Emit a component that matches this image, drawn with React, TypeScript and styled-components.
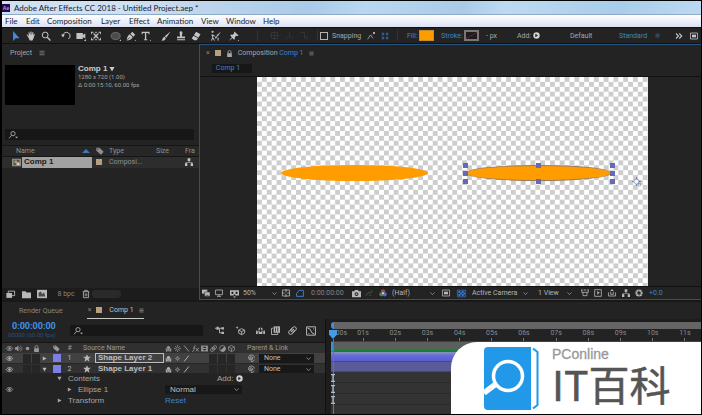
import React from "react";
import styled, { createGlobalStyle, css } from "styled-components";

const c = {
  bg: "#232323",
  dark: "#191919",
  field: "#171717",
  line: "#111111",
  text: "#a8a8a8",
  dim: "#858585",
  blue: "#3d84cf",
  edge: "#27547f",
  orange: "#ff9c00",
  tan: "#b59f7e",
  layer: "#7c80e6",
};

const GlobalStyle = createGlobalStyle`
  * { box-sizing: border-box; }
  html, body { margin: 0; background: #000; }
  body { font-family: Roboto, "Liberation Sans", sans-serif; font-size: 7px; line-height: 10px; color: ${c.text}; }
  button, input, select { font: inherit; color: inherit; margin: 0; padding: 0; border: 0; background: none; }
  button { display: inline-flex; align-items: center; justify-content: center; white-space: nowrap; }
`;

/* ---------- icons ---------- */

const Svg = styled.svg<{ $w: number; $h?: number }>`
  width: ${(p) => p.$w}px;
  height: ${(p) => p.$h ?? p.$w}px;
  flex: none;
  display: block;
  overflow: visible;
`;

const S = { fill: "none", stroke: "currentColor", strokeWidth: 1.2 };
const F = { fill: "currentColor" };

const glyphs: Record<string, React.ReactNode> = {
  arrow: <path {...F} d="M2.500 0v12l3-3.400h4.700z" />,
  hand: (
    <path {...F} d="M2.2 6.5 0.8 4.8c.5-.9 1.3-.4 1.9.4L3.6 6 2.9 2c.6-.7 1.2-.4 1.4.3l.9 2.6V1c.6-.6 1.2-.4 1.4.2l.2 3.7L7.9 1.4c.7-.4 1.2 0 1.1.7l-.6 3.3 1.3-1.8c.7-.2 1.1.3.8 1L8.9 9l-1.2 2.5H4.6z" />
  ),
  magnify: (
    <g {...S}>
      <circle cx="5" cy="4.8" r="3.5" />
      <path d="m7.5 7.5 3.8 4" strokeWidth="1.6" />
    </g>
  ),
  rotate: (
    <g {...S}>
      <path d="M2.3 5.5A4.3 4.3 0 1 1 8.8 9.6" />
      <path {...F} stroke="none" d="m0 4.2 4.6-.1L2.4 7.8z" />
    </g>
  ),
  camera: <path {...F} d="M.5 2.5h7.7v2.2l3-1.8v6.2l-3-1.8v2.2H.5zM9.5 12l2.5-2.5V12z" />,
  anchor: (
    <g {...F}>
      <path d="M0 1h3v1H1v2H0zM9 1h3v3h-1V2H9zM0 8h1v2h2v1H0zM11 8h1v3H9v-1h2z" />
      <path d="M5.2 1h1.6v1.6H5.2zM5.2 9.4h1.6V11H5.2zM2.7 2.7l1.5.4 1.8 1.7 1.8-1.7 1.5-.4-.4 1.5L7.2 6l1.7 1.8.4 1.5-1.5-.4L6 7.2 4.200 8.900l-1.500.4.4-1.500L4.800 6 3.100 4.200z" />
    </g>
  ),
  ellipse: (
    <g>
      <ellipse cx="5.600" cy="6" rx="5.400" ry="4.200" fill="#4b4b4b" stroke="#777" />
      <path {...F} d="m10 12 2-2v2z" />
    </g>
  ),
  pen: (
    <g>
      <path {...F} d="M.8 11.500C1.200 8.500 1.600 5.500 4.500 4L8 7.500C6.600 10.300 3.800 11 .8 11.500zM5.300 3.200 7.500 1l3.600 3.600-2.300 2.200zM10.500 12l1.500-1.500V12z" />
      <path d="M1.200 11 4.600 7.600" stroke={c.bg} strokeWidth=".8" />
    </g>
  ),
  type: <path {...F} d="M.8 1h9.400v2.800H9.200L8.700 2.300H6.300v7.500l1.200.4v.8h-4v-.8l1.200-.4V2.300H2.300L1.800 3.800h-1zM10.500 12l1.500-1.500V12z" />,
  brush: <path {...F} d="M11.500.5 6.300 8 4.500 6.300zM4 6.800 5.800 8.600C5 11 3 11.800.6 11.500 2 10.500 1.600 7.600 4 6.800z" />,
  stamp: <path {...F} d="M4.300 2.200C4.300-.2 7.700-.2 7.700 2.200L7 6.500h3.800v2.200H1.200V6.500H5zM1.200 9.800h9.600v1.200H1.200z" />,
  eraser: <path {...F} d="M6.200.8 11.400 4 8.800 8 3.500 4.900zM3 5.600l5.300 3.200-1.500 2.300H4L.8 9z" />,
  roto: (
    <g>
      <path {...F} d="m12 .5-4 6-1.500-1zM6 6l1.500 1.200C7 8.800 5.600 9 4.600 9 5.500 8 5 6.800 6 6zM1.800 2.200a1.300 1.300 0 1 1 .1 0z" />
      <path {...S} d="M2 4v4l-1.500 3.500M2.200 8 4 11.500M8.500 8v3.500M.5 5l4 1" />
    </g>
  ),
  pin: <path {...F} d="m6.500.5 5 5-1.300.4-1.500-.3-1.800 1.900.2 2-1 .9L4 8.300.8 11.500.5 11l3-3.500L1.500 5.300l1-1 2 .3L6.300 2.700 6 1.500zM10.500 12l1.500-1.500V12z" />,
  axisA: <path {...S} d="M2 2h8v8H2zM6 0v12M0 6h12" />,
  axisB: <path {...S} d="M6 1v6l-5 3.500M6 7l5 3.500" />,
  axisC: <path {...S} d="M1 2h5v7l5-3M6 9l5 2" />,
  snapA: (
    <g>
      <path {...S} d="m1 11 4-6.500L9 9.500" />
      <path {...F} d="M9 0h3v3H9zM6.500 4h2v1h-2z" />
    </g>
  ),
  snapB: (
    <g {...S} strokeWidth="1.600">
      <path d="M1 1l3 3M11 1 8 4M1 11l3-3M11 11 8 8M1 4h3V1M11 4H8V1M1 8h3v3M11 8H8v3" />
    </g>
  ),
  plus: (
    <g>
      <circle cx="6" cy="6" r="5.500" fill="#d2d2d2" />
      <path {...F} fill="#232323" d="m4 3 4.500 3L4 9z" />
    </g>
  ),
  menu: <path {...S} d="M1 2.500h10M1 6h10M1 9.500h10" />,
  more: <path {...S} strokeWidth="2.200" d="m0 1 5 5-5 5M6.500 1l5 5-5 5" />,
  lock: (
    <g>
      <path {...F} d="M2 5.500h8V12H2z" />
      <path {...S} strokeWidth="1.600" d="M3.500 5.500v-2c0-3.500 5-3.500 5 0V6" />
    </g>
  ),
  tag: <path {...F} d="M.5 1H5l6.500 6-4 4.700L.5 5.500zM2 2.300v1.400h1.500V2.300z" fillRule="evenodd" />,
  tree: <path {...F} d="M4 .5h4v4H6.600v1.700H11V8h1v4H8.500V8h1.200v-.7H2.300V8h1.200v4H0V8h1V6.200h4.400V4.500H4z" />,
  comp: (
    <g>
      <path fill="#8f8f8f" d="M0 1h12v10H0z" />
      <path fill="#4c584f" d="M2 2.500h8v7H2z" />
      <circle cx="5" cy="5" r="2" fill="#c69554" />
      <path fill="#d5d0c5" d="M6 6h4v3.500H6z" />
    </g>
  ),
  interpret: (
    <g>
      <path {...S} d="M3 1.500h8.500v6H3z" />
      <path {...F} d="M.5 4H8v6.500H.5z" />
    </g>
  ),
  folder: <path {...F} d="M0 1.500h4.500L6 3.200h6V11H0z" />,
  newcomp: (
    <g>
      <path {...F} d="M0 1h12v10H0z" />
      <path fill="#4a4a4a" d="M2 4.500 4.500 3l2 3L8.500 4 10 9H2z" />
    </g>
  ),
  trash: <path {...S} d="M1 2.500h10M4 2.500v-2h4v2M2.200 2.500V11.500h7.600v-9M4.800 5v4.500M7.200 5v4.500" />,
  layers: (
    <g>
      <path {...F} d="M0 1h8v6H0z" />
      <path d="M4 4.500h8V11H4z" fill="currentColor" stroke={c.bg} strokeWidth=".8" />
      <path d="M6.500 9.500h3" stroke={c.bg} />
    </g>
  ),
  monitor: <path {...S} d="M.8 1.500h10.400v7H.8zM3 11h6M6 8.500V11" />,
  goggles: (
    <g>
      <path {...F} d="M0 1.500h12V8.500H7.500L6 6.500 4.500 8.500H0z" />
      <path fill={c.bg} d="M2 3.500h2.500v3H2zM7.500 3.500H10v3H7.500z" />
      <path {...F} d="m6 12 2-2H4z" />
    </g>
  ),
  gridicon: <path {...S} d="M.7 1.500h10.600v9H.7zM6 0v5M6 7v5M0 6h4M8 6h4" />,
  mask: <path {...S} strokeWidth="1.400" d="M.7 11V7L5 2h6v9z" />,
  snap: (
    <g>
      <path {...F} d="M0 3h3l1-1.700h4L9 3h3v8H0z" />
      <circle cx="6" cy="6.800" r="2.600" fill={c.bg} />
      <circle cx="6" cy="6.800" r="1.300" {...F} />
    </g>
  ),
  showsnap: <path fill="none" stroke="#3c4c38" strokeWidth="1.800" d="m1 10 5-5 2 1 3.500-4M6 9l3 1" />,
  rgb: (
    <g>
      <circle cx="6" cy="3.700" r="3.300" fill="#b04341" />
      <circle cx="3.600" cy="7.900" r="3.200" fill="#478459" />
      <circle cx="8.400" cy="7.900" r="3.200" fill="#4a73c3" />
      <circle cx="6" cy="6.300" r="1.500" fill="#ddd" />
    </g>
  ),
  roi: (
    <g>
      <path {...S} d="M.7 1.500h10.600v9H.7z" />
      <path {...F} d="M3 4h6v4H3z" />
    </g>
  ),
  transp: (
    <g>
      <path fill="#183b68" stroke="#2e70b8" d="M.5 1.500h11v9H.5z" />
      <path fill="#4c85c1" d="M2 3h2.500v2H2zM6.500 3H9v2H6.500zM4.500 5h2v2h-2zM9 5h1.500v2H9zM2 7h2.500v2H2zM6.500 7H9v2H6.500z" />
    </g>
  ),
  pixel: <path {...S} d="M0 1.500h3M9 1.500h3M3 5h6v5H3zM1 2v3h2M11 2v3H9M4 1.500h4" />,
  fast: (
    <g>
      <path {...S} d="M1 1h10v10H1z" />
      <path {...F} d="m4.500 3 4.500 3-2 .5L5.500 9z" />
    </g>
  ),
  timeline: (
    <g>
      <path {...S} d="M.7 5v5.500h10.600V5M4 4v4M8 4v4M4 8h4" />
      <path {...F} d="m6 0 2.500 3h-5z" />
    </g>
  ),
  exposure: (
    <g>
      <circle cx="6" cy="6" r="4" fill="none" stroke="currentColor" strokeWidth="2.700" />
      <path stroke={c.bg} strokeWidth=".7" d="m6 .500-1 3M11 3.500 8.500 4M11 8.500 8.300 7.500M6 11.500l1-3M1 8.500 3.500 8M1 3.500l2.500 1" />
    </g>
  ),
  flow: (
    <g>
      <path {...S} d="M0 3h6v6h3M6 3h3" />
      <path {...F} d="M2 1h3v4H2zM8.500 1.500H12v3H8.500zM8.500 7.500H12v3H8.500z" />
    </g>
  ),
  cube: (
    <g>
      <path {...S} d="m7.500 3.500 4 2v4l-4 2-4-2v-4zM3.500 5.500l4 2 4-2M7.500 7.500v4" />
      <path {...F} d="M1.500 0l.6 1.600 1.600.600-1.600.6-.6 1.600-.6-1.600L-.7 2.200l1.600-.6z" />
    </g>
  ),
  hide: (
    <g>
      <path {...F} d="M0 6h12v4.500H0zM3 5C3 .8 9 .8 9 5z" />
      <path stroke={c.bg} strokeWidth="1.200" d="M6 2v6M3 8v3M9 8v3M1 6.500h10" />
    </g>
  ),
  shy: (
    <g>
      <path {...F} d="M1 6h10v1.500H1zM3 5.500C3 .5 9 .5 9 5.500zM1.500 8h3v3h-3zM7.500 8h3v3h-3z" />
      <path {...S} d="M6 6v5" />
    </g>
  ),
  blend: (
    <g>
      <path {...S} d="M3 3H.7v8.300H9V9" />
      <path {...F} d="M3.500.500H12V9H3.500z" />
      <path stroke={c.bg} d="M6 2v5.500M9 2v5.500" />
    </g>
  ),
  blur: (
    <g {...S}>
      <ellipse cx="4.600" cy="7.600" rx="4.200" ry="2.900" transform="rotate(-40 4.600 7.600)" />
      <ellipse cx="7.400" cy="4.600" rx="4.200" ry="2.900" transform="rotate(-40 7.400 4.600)" />
      <path d="m4 8 4-4" />
    </g>
  ),
  graph: <path {...S} d="M.7 1h10.600v10H.7zM2 2.500c5 0 3 7 8 7M3 9h1M9 3v1" />,
  eye: (
    <g>
      <path {...S} strokeWidth="1.500" d="M.5 6C3 1.500 9 1.500 11.500 6 9 10.500 3 10.500.5 6z" />
      <circle cx="6" cy="6" r="2.200" {...F} />
    </g>
  ),
  audio: (
    <g>
      <path {...F} d="M0 4h2.500L6 1v10L2.500 8H0z" />
      <path {...S} d="M7.500 3.500c2 1.500 2 3.500 0 5M9 1.500c4 2.500 4 6.500 0 9" />
    </g>
  ),
  solo: <circle cx="6" cy="6" r="3" {...F} />,
  star: <path {...F} d="m6 .3 1.600 4h4.100L8.500 7l1.200 4.500L6 8.900l-3.700 2.600L3.500 7 .3 4.300h4.100z" />,
  sun: (
    <g>
      <circle cx="6" cy="6" r="2.600" {...S} />
      <path {...S} d="M6 0v2.500M6 9.500V12M0 6h2.500M9.500 6H12M2 2l1.500 1.500M8.500 8.500 10 10M10 2 8.500 3.500M3.500 8.500 2 10" />
    </g>
  ),
  slash: <path {...S} strokeWidth="1.600" d="M2 11 10 1" />,
  backslash: <path {...S} strokeWidth="1.600" d="m2 1 8 10" />,
  effects: <path {...S} strokeWidth="1.500" d="M6 1C4 .5 4 3 3.500 6S2.500 11.500.5 11M2 5h3.500M6.500 5l5 6M11.500 5l-5 6" />,
  film: (
    <g>
      <path {...F} d="M0 1h12v10H0z" />
      <path fill={c.bg} d="M4 3h4.500v2.300H4zM4 6.700h4.500V9H4zM1.300 2.500h1V4h-1zM1.300 6h1v1.500h-1zM10 2.500h1V4h-1zM10 6h1v1.500h-1z" />
    </g>
  ),
  adjust: (
    <g>
      <circle cx="6" cy="6" r="5" {...S} />
      <path {...F} d="M9.500 2.500A5 5 0 1 1 2.500 9.500z" />
    </g>
  ),
  box3d: <path {...S} d="M6 .7 11 3.300v5.400L6 11.300 1 8.700V3.300zM1 3.300 6 6l5-2.700M6 6v5.300" />,
  whip: <path {...S} d="M7.800 6A1.800 1.800 0 1 1 6 4.200c4 0 3 5-.5 4.800C.5 8.500 1.500 1.500 6.500 1.500c3 0 4.500 2 4.500 4M6 11.500c2 0 4-1 5-3" />,
  target: (
    <g {...S}>
      <path d="M6 1.500 10.500 6 6 10.500 1.500 6zM6 0v3M0 6h3M9 6h3M6 9v3" />
      <path d="M8 8.500h3.500V12H8z" opacity=".6" />
    </g>
  ),
  right: <path {...F} d="m2 1 9 5-9 5z" />,
  down: <path {...F} d="M1 2h10L6 11z" />,
  up: <path fill="#3d78ba" d="M0 9 6 3l6 6z" />,
  chevron: <path {...S} strokeWidth="1.500" d="m1 3.500 5 5 5-5" />,
  find: (
    <g>
      <circle cx="6" cy="4" r="3.200" {...S} />
      <path {...S} d="M4 6.500 0 11" />
      <path {...F} d="M9 8.500h4.500L11.300 11z" />
    </g>
  ),
};

const Icon = ({ n, s = 8 }: { n: string; s?: number }) => (
  <Svg viewBox="0 0 12 12" $w={s} aria-hidden="true">
    {glyphs[n]}
  </Svg>
);

/* ---------- shell ---------- */

const Window = styled.main`
  min-height: 100vh;
  display: flex;
  flex-direction: column;
  position: relative;
  border: solid #000;
  border-width: 1px 1px 2px 2px;
  background: ${c.bg};
  overflow: hidden;
`;

const TitleBar = styled.header`
  height: 14px;
  display: flex;
  align-items: center;
  gap: 4px;
  color: #16202e;
  font: 8px/12px Lato, sans-serif;
  background: linear-gradient(100deg, #cfe0f2 0 18%, #b9d3ec 32%, #a9cbe9 44%, #b9d7f0 52%, #aacbe8 66%, #bedaf1 72%, #a9cdea 88%, #bcd9f1);
  border-bottom: 1px solid #8faac4;
`;

const AppBadge = styled.span`
  width: 8px;
  height: 8px;
  background: #2a0b4a;
  color: #b79be8;
  font: bold 5px/8px "Liberation Sans", sans-serif;
  text-align: center;
`;

const MenuBar = styled.nav`
  height: 12px;
  display: grid;
  grid-template-columns: 21px 21px 54px 28px 28px 44px 25px 37px 1fr;
  padding-left: 3px;
  justify-items: start;
  background: linear-gradient(#fff, #dde1f3);
  color: #1c1c28;
  font: 8px/12px Lato, sans-serif;
`;

const ToolBar = styled.div`
  height: 17px;
  display: flex;
  align-items: center;
  padding-left: 6px;
  border: solid ${c.line};
  border-width: 1px 0;
`;

const ToolGroup = styled.div<{ $gap?: number; $dim?: boolean }>`
  display: flex;
  margin-right: ${(p) => p.$gap ?? 5}px;
  color: #c4c4c4;
  ${(p) => p.$dim && css`color: #373737; padding-left: 9px;`}
`;

const IconButton = styled.button<{ $w?: number; $color?: string }>`
  width: ${(p) => p.$w ?? 15}px;
  height: 12px;
  flex: none;
  ${(p) => p.$color && `color: ${p.$color};`}
`;

const Divider = styled.span`
  width: 1px;
  height: 11px;
  background: #333;
`;

const Options = styled.div`
  flex: 1;
  display: grid;
  align-items: center;
  grid-template-columns: 12px 35px 14px 16px 10px 12px 22px 23px 22px 31px 13px 40px 49px 32px 24px 15px 1fr;
  padding-left: 2px;
  overflow: hidden;
`;

const Check = styled.input`
  appearance: none;
  width: 8px;
  height: 8px;
  border: 1px solid #b2b2b2 !important;
`;

const Text = styled.span<{ $tone?: string }>`
  white-space: nowrap;
  color: ${(p) => p.$tone ?? "inherit"};
`;

const TextButton = styled.button<{ $tone?: string }>`
  justify-self: start;
  color: ${(p) => p.$tone ?? "inherit"};
`;

const Paint = styled.button<{ $none?: boolean }>`
  width: 15px;
  height: 11px;
  background: ${(p) => (p.$none ? "linear-gradient(150deg, #231a1b 45%, #6b2f35 50%, #231a1b 55%)" : c.orange)};
  border: ${(p) => (p.$none ? "2px solid #777" : "1px solid #c98a28")};
`;

/* ---------- panels ---------- */

const Workspace = styled.div`
  flex: 1;
  display: flex;
  min-height: 256px;
`;

const ProjectPanel = styled.section`
  width: 197px;
  flex: none;
  display: flex;
  flex-direction: column;
`;

const PanelTitle = styled.h2`
  display: flex;
  align-items: center;
  gap: 7px;
  height: 17px;
  margin: 0;
  padding-left: 8px;
  font: inherit;
`;

const Summary = styled.div`
  display: flex;
  gap: 3px;
  padding: 4px 3px 0;
`;

const Thumb = styled.div`
  width: 70px;
  height: 40px;
  background: #000;
`;

const Facts = styled.div`
  font: 6px/8px Roboto, sans-serif;
  color: #a2a2a2;
`;

const CompName = styled.button`
  gap: 2px;
  font: bold 8px/8px "Liberation Sans", sans-serif;
  color: #cdcdcd;
  display: flex;
`;

const SearchBox = styled.label<{ $gap?: boolean }>`
  display: flex;
  align-items: center;
  gap: 4px;
  height: 11px;
  padding-left: 4px;
  background: ${c.field};
  color: #bbb;
  ${(p) => p.$gap && css`margin: 24px 5px 5px 3px;`}
  input { flex: 1; min-width: 0; outline: 0; }
`;

const Items = styled.table`
  width: 100%;
  table-layout: fixed;
  border-collapse: collapse;
  color: #909090;
  th, td { padding: 0; height: 11px; font-weight: normal; text-align: left; white-space: nowrap; }
  thead tr { background: #272727; border: solid #151515; border-width: 1px 0; }
  tbody td { height: 11px; background: #2d2d2d; }
  tbody svg { color: #c4c4c4; }
`;

const Col = styled.col<{ $w?: number }>`
  width: ${(p) => (p.$w ? `${p.$w}px` : "auto")};
`;

const HeadCell = styled.span`
  display: flex;
  align-items: center;
  justify-content: space-between;
  padding: 0 2px 0 4px;
`;

const Chosen = styled.td`
  && { background: #a2a2a2; color: #1a1a1a; font: bold 8px/10px "Liberation Sans", sans-serif; padding-left: 2px; }
`;

const Swatch = styled.i<{ $color: string; $w?: number }>`
  display: block;
  width: ${(p) => p.$w ?? 6}px;
  height: ${(p) => p.$w ?? 6}px;
  background: ${(p) => p.$color};
`;

const ProjectFooter = styled.footer`
  height: 12px;
  margin-top: auto;
  display: grid;
  grid-template-columns: 15px 16px 19px 28px 10px 29px;
  align-items: center;
  padding-left: 2px;
  background: #1c1c1c;
  color: #b8b8b8;
`;

const Pill = styled.span`
  height: 8px;
  border-radius: 4px;
  background: #2a2a2a;
`;

const CompPanel = styled.section`
  flex: 1;
  min-width: 0;
  display: flex;
  flex-direction: column;
  border: 1px solid ${c.edge};
  border-right: 0;
`;

const CompHead = styled.header`
  height: 16px;
  display: flex;
  align-items: center;
  gap: 5px;
  padding-left: 6px;
`;

const CompTabs = styled.div`
  height: 16px;
  padding: 2px 0 0 12px;
  border-bottom: 1px solid ${c.line};
`;

const CompTab = styled.button`
  width: 40px;
  height: 9px;
  padding-right: 8px;
  background: ${c.field};
  color: ${c.blue};
`;

const Viewer = styled.div`
  flex: 1;
  display: flex;
  padding: 0 53px 0 57px;
`;

const Canvas = styled.div`
  flex: 1;
  position: relative;
  background: repeating-conic-gradient(#cdcdcd 0 25%, #fff 0 50%) 0 0 / 2.5% 4.7%;
`;

const Ellipse = styled.div<{ $x: number; $picked?: boolean }>`
  position: absolute;
  left: ${(p) => p.$x}px;
  top: 88px;
  width: 147px;
  height: 16px;
  border-radius: 50%;
  background: ${c.orange};
  ${(p) => p.$picked && "border: 1px solid #9d7a5c;"}
`;

const Handle = styled.i<{ $x: number; $y: number }>`
  position: absolute;
  left: ${(p) => p.$x}px;
  top: ${(p) => p.$y}px;
  width: 5px;
  height: 5px;
  background: #6669b5;
`;

const AnchorMark = styled.span`
  position: absolute;
  left: 375px;
  top: 100px;
  color: #6f83bd;
`;

const ViewFooter = styled.footer`
  height: 13px;
  display: grid;
  align-items: center;
  justify-items: start;
  grid-template-columns: 13px 14px 14px 39px 14px 15px 41px 13px 14px 13px 50px 15px 15px 66px 43px 13px 14px 14px 13px 14px 1fr;
  padding-left: 2px;
  border-top: 1px solid ${c.line};
  color: #b8b8b8;
`;

const SelectWrap = styled.label<{ $w: string; $fill?: boolean }>`
  display: flex;
  align-items: center;
  width: ${(p) => p.$w};
  height: 9px;
  padding-right: 3px;
  color: #b5b5b5;
  ${(p) => p.$fill && css`background: #181818; padding-left: 5px; color: #c0c0c0;`}
  select { appearance: none; flex: 1; min-width: 0; height: 9px; line-height: 9px; outline: 0; }
`;

const Select = ({ value, label, w = "100%", fill }: { value: string; label: string; w?: string; fill?: boolean }) => (
  <SelectWrap $w={w} $fill={fill}>
    <select aria-label={label} defaultValue={value}>
      <option>{value}</option>
    </select>
    <Icon n="chevron" s={5} />
  </SelectWrap>
);

/* ---------- timeline ---------- */

const Timeline = styled.section`
  flex: none;
  border-top: 2px solid #181818;
`;

const Tabs = styled.div`
  display: flex;
  align-items: center;
  height: 17px;
  padding-left: 17px;
  gap: 24px;
  color: ${c.dim};
`;

const ActiveTab = styled.div`
  display: flex;
  align-items: center;
  gap: 5px;
  width: 57px;
  height: 17px;
  padding-left: 1px;
  border-bottom: 1px solid #c9c9c9;
  color: #c0c0c0;
  i { margin-right: 2px; }
`;

const TimelineBody = styled.div`
  display: flex;
  height: 95px;
`;

const LayerSide = styled.div`
  width: 324px;
  flex: none;
  display: flex;
  flex-direction: column;
  border-right: 1px solid ${c.line};
`;

const Controls = styled.div`
  height: 23px;
  display: grid;
  grid-template-columns: 68px 133px 7px 21px 20px 17px 15px 18px 20px;
  align-items: center;
  color: #b5b5b5;
`;

const Clock = styled.div`
  align-self: start;
  padding: 2px 0 0 10px;
  font: bold 9px/10px Roboto, sans-serif;
  color: #3f92e6;
  small { display: block; margin-left: -4px; font: 6px/8px Roboto, sans-serif; color: #27507c; white-space: nowrap; }
`;

const Row = styled.div<{ $kind?: "head" | "picked" | "layer" | "prop" }>`
  display: grid;
  align-items: center;
  grid-template-columns: 40px 11px 11px 19px 12px 69px 73px 10px 12px 56px;
  height: ${(p) => (p.$kind === "head" || p.$kind === "prop" ? 11 : 10)}px;
  background: ${(p) => ({ head: "#303030", picked: "#414141", layer: "#313131", prop: c.bg })[p.$kind ?? "layer"]};
  color: #b8b8b8;
  ${(p) => p.$kind === "head" && css`border-top: 1px solid #161616; color: #999;`}
  ${(p) => p.$kind === "layer" && css`border-top: 1px solid #272727;`}
`;

const PropRow = styled(Row)<{ $indent: number }>`
  grid-template-columns: 16px ${(p) => p.$indent}px 11px 1fr 78px 82px;
  font: 8px/10px "Liberation Sans", sans-serif;
  color: #a5a5a5;
`;

const Cells = styled.span<{ $pad?: number }>`
  display: grid;
  grid-auto-flow: column;
  grid-auto-columns: 9px;
  justify-content: start;
  padding-left: ${(p) => p.$pad ?? 0}px;
  justify-items: center;
  align-items: center;
`;

const Slot = styled.i<{ $at: number }>`
  grid-column: ${(p) => p.$at};
  justify-self: stretch;
  height: 9px;
  margin-right: 1px;
  background: #262626;
`;

const LayerName = styled.span<{ $boxed?: boolean }>`
  height: 10px;
  padding-left: 2px;
  border: 1px solid ${(p) => (p.$boxed ? "#bdbdbd" : "transparent")};
  font: bold 8px/8px "Liberation Sans", sans-serif;
  color: #bdbdbd;
  white-space: nowrap;
`;

const AddLabel = styled.span`
  display: flex;
  align-items: center;
  gap: 3px;
  justify-self: end;
  width: 26px;
  white-space: nowrap;
`;

const TrackSide = styled.div`
  flex: 1;
  position: relative;
  padding-left: 5px;
  display: flex;
  flex-direction: column;
  background: #1d1d1d;
`;

const Navigator = styled.div`
  height: 7px;
  flex: none;
  margin-top: 3px;
  background: #656565;
  border-left: 3px solid #3e8fdb;
  border-radius: 3px 0 0 3px;
`;

const Ruler = styled.div`
  height: 13px;
  flex: none;
  display: grid;
  grid-template-columns: 16px repeat(11, 1fr);
  background: ${c.bg};
  color: #8c8c8c;
  line-height: 9px;
  border-bottom: 1px solid #5d3535;
`;

const Tick = styled.span`
  display: flex;
  flex-direction: column;
  align-items: center;
  &::after { content: ""; width: 1px; height: 3px; background: #777; }
  &:first-child { align-items: flex-end; }
  &:first-child::after { content: none; }
`;

const WorkArea = styled.div`
  height: 10px;
  flex: none;
  background: #5c605c;
  border-left: 3px solid #3e8fdb;
  border-bottom: 2px solid #15812f;
`;

const Track = styled.div<{ $kind: "picked" | "layer" | "empty" }>`
  flex: none;
  height: ${(p) => (p.$kind === "empty" ? 11 : 10)}px;
  border-bottom: 1px solid ${(p) => (p.$kind === "empty" ? "#292929" : "#45477f")};
  background: ${(p) => ({ picked: "linear-gradient(#8694bd, #6468d8 45%, #595dcc)", layer: "#595c98", empty: "#333" })[p.$kind]};
`;

const TrackRest = styled.div`
  flex: 1;
  background: #333;
`;

const Playhead = styled.div`
  position: absolute;
  left: 2px;
  top: 11px;
  bottom: 0;
  width: 10px;
  display: flex;
  flex-direction: column;
  align-items: center;
  color: #459be8;
  &::after { content: ""; flex: 1; width: 1px; background: #457fae; }
`;

const Beams = styled.div`
  position: absolute;
  left: 4px;
  top: 55px;
  display: grid;
  gap: 3px;
`;

/* ---------- brand card ---------- */

const Brand = styled.aside`
  position: absolute;
  right: 0;
  bottom: 0;
  width: 250px;
  height: 72px;
  display: flex;
  padding: 5px 0 0 33px;
  gap: 13px;
  background: #fff;
  border-top-left-radius: 26px;
`;

const BrandText = styled.div`
  color: #555;
  font: 41px/44px "Noto Sans CJK SC", sans-serif;
  -webkit-text-stroke: 0.5px #555;
  white-space: nowrap;
`;

const BrandSmall = styled.div`
  color: #999;
  font: 14px/14px "Liberation Sans", sans-serif;
  -webkit-text-stroke: 0.3px #999;
`;

const BookLogo = () => (
  <Svg viewBox="0 0 55 64" $w={55} $h={64} role="img" aria-label="PConline">
    <path fill="#2199e8" d="M4 0h43v63H4a4 4 0 0 1-4-4V4a4 4 0 0 1 4-4z" />
    <circle cx="24" cy="29" r="14.500" fill="#2199e8" stroke="#fff" strokeWidth="3.500" />
    <path d="M12.500 36.500 0 46" stroke="#fff" strokeWidth="5.500" />
    <path d="M49 1.500 53.500 5v53L49 61.500" fill="none" stroke="#2199e8" strokeWidth="2" />
  </Svg>
);

const toolGroups: { icons: string[]; gap?: number }[] = [
  { icons: ["arrow", "hand", "magnify"] },
  { icons: ["rotate", "camera", "anchor"] },
  { icons: ["ellipse", "pen", "type"] },
  { icons: ["brush", "stamp", "eraser"] },
  { icons: ["roto"], gap: 3 },
  { icons: ["pin"], gap: 16 },
];
const menus = ["File", "Edit", "Composition", "Layer", "Effect", "Animation", "View", "Window", "Help"];
const seconds = ["01s", "02s", "03s", "04s", "05s", "06s", "07s", "08s", "09s", "10s", "11s"];
const switches = ["shy", "sun", "backslash", "effects", "film", "blur", "adjust", "box3d"];
const handles = [[206, 86], [279, 86], [353, 86], [206, 94], [353, 94], [206, 102], [279, 102], [353, 102]];

const Tool = ({ n, w, s = 8, color }: { n: string; w?: number; s?: number; color?: string }) => (
  <IconButton aria-label={n} $w={w} $color={color}>
    <Icon n={n} s={s} />
  </IconButton>
);

const Layer = ({ index, name, picked }: { index: number; name: string; picked?: boolean }) => (
  <Row $kind={picked ? "picked" : "layer"}>
    <Cells $pad={3}>
      <Icon n="eye" s={7} />
      <Slot $at={3} />
      <Slot $at={4} />
    </Cells>
    <Icon n={picked ? "right" : "down"} s={5} />
    <Swatch $color={c.layer} $w={8} />
    <Text>&nbsp;&nbsp;{index}</Text>
    <Icon n="star" s={8} />
    <LayerName $boxed={picked}>{name}</LayerName>
    <Cells>
      <Icon n="shy" s={7} />
      <Icon n="sun" s={5} />
      <Icon n="slash" s={7} />
      <Slot $at={6} />
      <Slot $at={7} />
      <Slot $at={8} />
    </Cells>
    <span />
    <Icon n="whip" s={8} />
    <Select label={`Parent of ${name}`} value="None" w="55px" fill />
  </Row>
);

export default function App() {
  return (
    <>
      <GlobalStyle />
      <Window>
        <TitleBar>
          <AppBadge>Ae</AppBadge>
          <Text>Adobe After Effects CC 2018 - Untitled Project.aep *</Text>
        </TitleBar>
        <MenuBar>
          {menus.map((m) => (
            <button key={m}>{m}</button>
          ))}
        </MenuBar>
        <ToolBar>
          {toolGroups.map((g) => (
            <ToolGroup key={g.icons[0]} $gap={g.gap}>
              {g.icons.map((n) => (
                <Tool key={n} n={n} s={10} color={n === "arrow" ? "#3f8ee0" : undefined} />
              ))}
            </ToolGroup>
          ))}
          <Divider />
          <ToolGroup $dim $gap={5}>
            <Tool n="axisA" s={9} />
            <Tool n="axisB" s={9} />
            <Tool n="axisC" s={9} />
          </ToolGroup>
          <Divider />
          <Options>
            <Check type="checkbox" id="snapping" />
            <label htmlFor="snapping">Snapping</label>
            <Tool n="snapA" w={8} />
            <Tool n="snapB" w={8} color="#315f91" />
            <Divider />
            <Text $tone={c.blue}>Fill:</Text>
            <Paint aria-label="Fill colour" />
            <Text $tone={c.blue}>Stroke:</Text>
            <Paint aria-label="Stroke colour" $none />
            <Text>- px</Text>
            <Text>Add:</Text>
            <Tool n="plus" w={13} s={7} />
            <TextButton>Default</TextButton>
            <TextButton $tone={c.blue}>Standard</TextButton>
            <Tool n="menu" w={12} s={5} color={c.blue} />
            <Tool n="more" w={8} s={6} color="#c4c4c4" />
            <Tool n="roi" w={8} s={8} color="#c4c4c4" />
          </Options>
        </ToolBar>

        <Workspace>
          <ProjectPanel>
            <PanelTitle>
              Project <Icon n="menu" s={6} />
            </PanelTitle>
            <Summary>
              <Thumb />
              <Facts>
                <CompName>
                  Comp 1 <Icon n="down" s={6} />
                </CompName>
                <div>1280 x 720 (1.00)</div>
                <div>Δ 0:00:15:10, 60.00 fps</div>
              </Facts>
            </Summary>
            <SearchBox $gap>
              <Icon n="find" s={8} />
              <input aria-label="Search project" />
            </SearchBox>
            <Items>
              <colgroup>
                <Col $w={10} />
                <Col $w={10} />
                <Col $w={70} />
                <Col $w={17} />
                <Col $w={47} />
                <Col $w={29} />
                <Col />
              </colgroup>
              <thead>
                <tr>
                  <th />
                  <th colSpan={2}>
                    <HeadCell>
                      Name <Icon n="up" s={8} />
                    </HeadCell>
                  </th>
                  <th>
                    <HeadCell>
                      <Icon n="tag" s={8} />
                    </HeadCell>
                  </th>
                  <th>Type</th>
                  <th>Size</th>
                  <th>Fra</th>
                </tr>
              </thead>
              <tbody>
                <tr>
                  <td />
                  <td>
                    <Icon n="comp" s={9} />
                  </td>
                  <Chosen>Comp 1</Chosen>
                  <td>
                    <HeadCell>
                      <Swatch $color={c.tan} />
                    </HeadCell>
                  </td>
                  <td>Composi...</td>
                  <td />
                  <td>
                    <Icon n="tree" s={8} />
                  </td>
                </tr>
              </tbody>
            </Items>
            <ProjectFooter>
              <Tool n="interpret" w={12} s={9} />
              <Tool n="folder" w={15} s={9} />
              <Tool n="newcomp" w={14} s={10} />
              <Text $tone={c.dim}>&nbsp;&nbsp;8 bpc</Text>
              <Tool n="trash" w={8} />
              <Pill />
            </ProjectFooter>
          </ProjectPanel>

          <CompPanel>
            <CompHead>
              <Text $tone={c.dim}>×</Text>
              <Swatch $color={c.tan} />
              <Icon n="lock" s={7} />
              <Text>
                Composition <Text $tone={c.blue}>Comp 1</Text>
              </Text>
              <Icon n="menu" s={5} />
            </CompHead>
            <CompTabs>
              <CompTab>Comp 1</CompTab>
            </CompTabs>
            <Viewer>
              <Canvas>
                <Ellipse $x={24} />
                <Ellipse $x={208} $picked />
                {handles.map(([x, y]) => (
                  <Handle key={`${x}-${y}`} $x={x} $y={y} />
                ))}
                <AnchorMark>
                  <Icon n="target" s={9} />
                </AnchorMark>
              </Canvas>
            </Viewer>
            <ViewFooter>
              <Tool n="layers" w={8} />
              <Tool n="monitor" w={8} />
              <Tool n="goggles" w={10} s={9} />
              <Select label="Magnification" value="50%" w="37px" />
              <Tool n="gridicon" w={8} />
              <Tool n="mask" w={8} color={c.blue} />
              <Text $tone={c.dim}>0:00:00:00</Text>
              <Tool n="snap" w={9} s={9} />
              <Tool n="showsnap" w={8} />
              <Tool n="rgb" w={8} />
              <Select label="Resolution" value="(Half)" w="46px" />
              <Tool n="roi" w={8} />
              <Tool n="transp" w={9} s={9} />
              <Select label="Camera" value="Active Camera" w="59px" />
              <Select label="Views" value="1 View" w="37px" />
              <Tool n="pixel" w={8} />
              <Tool n="fast" w={8} />
              <Tool n="timeline" w={8} />
              <Tool n="tree" w={8} />
              <Tool n="exposure" w={8} />
              <Text $tone={c.blue}>+0.0</Text>
            </ViewFooter>
          </CompPanel>
        </Workspace>

        <Timeline>
          <Tabs>
            <Text>Render Queue</Text>
            <ActiveTab>
              <Text $tone={c.dim}>×</Text>
              <Swatch $color={c.tan} />
              <Text>Comp 1</Text>
              <Icon n="menu" s={5} />
            </ActiveTab>
          </Tabs>
          <TimelineBody>
            <LayerSide>
              <Controls>
                <Clock>
                  0:00:00:00
                  <small>00000 (60.00 fps)</small>
                </Clock>
                <SearchBox>
                  <Icon n="find" s={8} />
                  <input aria-label="Search layers" />
                </SearchBox>
                <span />
                <Tool n="flow" w={18} s={9} />
                <Tool n="cube" w={18} s={9} />
                <Tool n="hide" w={18} s={9} />
                <Tool n="blend" w={15} s={9} />
                <Tool n="blur" w={18} s={9} />
                <Tool n="graph" w={20} s={10} />
              </Controls>
              <Row $kind="head">
                <Cells $pad={3}>
                  <Icon n="eye" s={7} />
                  <Icon n="audio" s={7} />
                  <Icon n="solo" s={7} />
                  <Icon n="lock" s={7} />
                </Cells>
                <span />
                <Icon n="tag" s={7} />
                <Text>&nbsp;&nbsp;#</Text>
                <Text>Source Name</Text>
                <span />
                <Cells>
                  {switches.map((n) => (
                    <Icon key={n} n={n} s={7} />
                  ))}
                </Cells>
                <span />
                <Text>Parent &amp; Link</Text>
              </Row>
              <Layer index={1} name="Shape Layer 2" picked />
              <Layer index={2} name="Shape Layer 1" />
              <PropRow $kind="prop" $indent={39}>
                <span />
                <span />
                <Icon n="down" s={5} />
                <Text>Contents</Text>
                <AddLabel>
                  Add: <Icon n="plus" s={7} />
                </AddLabel>
              </PropRow>
              <PropRow $kind="prop" $indent={49}>
                <Cells $pad={3}>
                  <Icon n="eye" s={7} />
                </Cells>
                <span />
                <Icon n="right" s={5} />
                <Text>Ellipse 1</Text>
                <Select label="Ellipse blend mode" value="Normal" w="77px" fill />
              </PropRow>
              <PropRow $kind="prop" $indent={39}>
                <span />
                <span />
                <Icon n="right" s={5} />
                <Text>Transform</Text>
                <TextButton $tone={c.blue}>Reset</TextButton>
              </PropRow>
            </LayerSide>
            <TrackSide>
              <Navigator />
              <Ruler>
                <Tick>:00s</Tick>
                {seconds.map((s) => (
                  <Tick key={s}>{s}</Tick>
                ))}
              </Ruler>
              <WorkArea />
              <Track $kind="picked" />
              <Track $kind="layer" />
              <Track $kind="empty" />
              <Track $kind="empty" />
              <Track $kind="empty" />
              <TrackRest />
              <Playhead>
                <Svg viewBox="0 0 8 9" $w={8} $h={9}>
                  <path {...F} d="M0 0h8v4.500L4 9 0 4.500z" />
                </Svg>
              </Playhead>
              <Beams>
                {[1, 2, 3].map((i) => (
                  <Svg key={i} viewBox="0 0 6 8" $w={6} $h={8} color="#a9bfce">
                    <path {...S} d="M1 .6h4M3 .6v6.800M1 7.400h4" />
                  </Svg>
                ))}
              </Beams>
            </TrackSide>
          </TimelineBody>
        </Timeline>

        <Brand>
          <BookLogo />
          <div>
            <BrandSmall>PConline</BrandSmall>
            <BrandText>IT百科</BrandText>
          </div>
        </Brand>
      </Window>
    </>
  );
}
